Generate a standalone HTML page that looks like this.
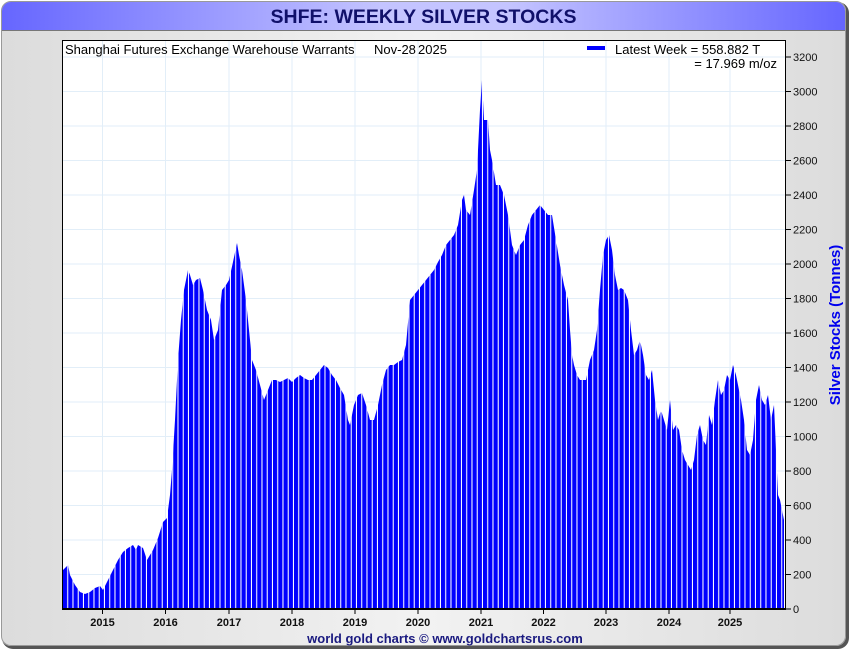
<!DOCTYPE html>
<html><head><meta charset="utf-8"><style>
html,body{margin:0;padding:0;background:#fff;width:850px;height:650px;overflow:hidden}
.frame{position:absolute;left:1px;top:1px;width:843px;height:643px;border:1px solid #999;border-radius:10px;box-shadow:2px 2px 0 1px #555;background:linear-gradient(90deg,#dcdcdc,#f2f2f2 50%,#dcdcdc);overflow:hidden}
.title{position:absolute;left:0;top:0;width:843px;height:28px;background:linear-gradient(90deg,#6666ff,#c4c4ff 45%,#c4c4ff 60%,#6666ff);border-bottom:1px solid #777;text-align:center;font:bold 19.5px "Liberation Sans",sans-serif;color:#10106a;line-height:30px}
svg{position:absolute;left:0;top:0}
</style></head><body>
<div class="frame"><div class="title">SHFE: WEEKLY SILVER STOCKS</div></div>
<svg width="850" height="650" font-family="Liberation Sans, sans-serif">
<defs><pattern id="p" patternUnits="userSpaceOnUse" width="5.25" height="10" x="63"><rect width="4.25" height="10" fill="#0000ff"/><rect x="4.25" width="1" height="10" fill="#fff"/></pattern></defs>
<rect x="62" y="40" width="724" height="569" fill="#fff"/>
<g stroke="#e2eef8" stroke-width="1">
<line x1="62" x2="786" y1="574.5" y2="574.5"/><line x1="62" x2="786" y1="540" y2="540"/><line x1="62" x2="786" y1="505.5" y2="505.5"/><line x1="62" x2="786" y1="471" y2="471"/><line x1="62" x2="786" y1="436.5" y2="436.5"/><line x1="62" x2="786" y1="402" y2="402"/><line x1="62" x2="786" y1="367.5" y2="367.5"/><line x1="62" x2="786" y1="333" y2="333"/><line x1="62" x2="786" y1="298.5" y2="298.5"/><line x1="62" x2="786" y1="264" y2="264"/><line x1="62" x2="786" y1="229.5" y2="229.5"/><line x1="62" x2="786" y1="195" y2="195"/><line x1="62" x2="786" y1="160.5" y2="160.5"/><line x1="62" x2="786" y1="126" y2="126"/><line x1="62" x2="786" y1="91.5" y2="91.5"/><line x1="62" x2="786" y1="57" y2="57"/>
<line x1="102.5" x2="102.5" y1="40" y2="609"/><line x1="165.5" x2="165.5" y1="40" y2="609"/><line x1="229" x2="229" y1="40" y2="609"/><line x1="292" x2="292" y1="40" y2="609"/><line x1="355" x2="355" y1="40" y2="609"/><line x1="418" x2="418" y1="40" y2="609"/><line x1="481" x2="481" y1="40" y2="609"/><line x1="543.5" x2="543.5" y1="40" y2="609"/><line x1="606" x2="606" y1="40" y2="609"/><line x1="669" x2="669" y1="40" y2="609"/><line x1="730" x2="730" y1="40" y2="609"/>
</g>
<polygon fill="url(#p)" points="63,609 63,570 68,565 70,575 75,585 80,592 85,594 90,592 95,588 100,586 103,590 108,580 113,570 118,560 123,552 128,548 133,545 136,550 138,545 143,548 147,560 150,555 153,550 158,538 163,522 167,518 170,495 172,470 175,420 178,360 181,320 184,290 188,270 190,275 193,285 196,280 200,278 203,290 207,310 211,320 214,340 218,330 222,290 226,285 229,280 233,262 237,243 239,255 242,270 246,300 249,330 252,360 256,370 260,385 264,400 268,390 272,380 276,380 280,382 284,380 288,378 292,382 296,378 300,375 304,378 308,380 312,380 316,375 320,370 324,365 328,368 332,375 336,380 340,388 344,395 348,420 350,425 354,405 358,395 362,393 366,405 370,420 374,420 378,405 382,385 386,370 390,365 394,365 398,362 402,360 406,345 410,300 414,295 418,290 422,285 426,280 430,275 434,270 438,262 442,255 446,245 450,240 454,235 458,225 462,200 464,195 466,210 470,215 474,190 477,170 480,110 482,80 484,120 486,120 488,120 490,150 492,160 496,185 500,185 504,195 508,215 512,245 516,255 520,245 524,240 528,225 532,215 536,210 540,205 544,210 548,215 552,215 556,240 560,265 564,285 568,300 570,330 572,355 574,365 577,375 580,380 583,380 586,380 590,360 594,350 597,330 600,290 603,255 606,240 609,235 612,250 615,275 618,290 621,288 624,290 628,300 631,330 634,355 637,350 640,340 643,355 646,375 649,380 652,370 655,400 658,420 661,410 664,420 667,430 670,400 673,430 676,425 679,430 682,450 685,460 688,465 691,470 694,460 697,435 700,425 703,440 706,445 709,415 712,425 715,400 718,380 721,395 724,390 727,375 730,380 733,365 736,375 738,385 741,400 744,420 747,450 750,455 753,440 756,400 759,385 762,400 765,405 768,395 771,420 774,405 776,450 778,495 780,500 782,510 784,520 784,609"/>
<rect x="62.5" y="40.5" width="723" height="568.5" fill="none" stroke="#000" stroke-width="1"/>
<line x1="62" x2="786" y1="609" y2="609" stroke="#000" stroke-width="2"/>
<g stroke="#000"><line x1="786" x2="791" y1="609" y2="609"/><line x1="786" x2="791" y1="574.5" y2="574.5"/><line x1="786" x2="791" y1="540" y2="540"/><line x1="786" x2="791" y1="505.5" y2="505.5"/><line x1="786" x2="791" y1="471" y2="471"/><line x1="786" x2="791" y1="436.5" y2="436.5"/><line x1="786" x2="791" y1="402" y2="402"/><line x1="786" x2="791" y1="367.5" y2="367.5"/><line x1="786" x2="791" y1="333" y2="333"/><line x1="786" x2="791" y1="298.5" y2="298.5"/><line x1="786" x2="791" y1="264" y2="264"/><line x1="786" x2="791" y1="229.5" y2="229.5"/><line x1="786" x2="791" y1="195" y2="195"/><line x1="786" x2="791" y1="160.5" y2="160.5"/><line x1="786" x2="791" y1="126" y2="126"/><line x1="786" x2="791" y1="91.5" y2="91.5"/><line x1="786" x2="791" y1="57" y2="57"/>
<line x1="102.5" x2="102.5" y1="609" y2="614"/><line x1="165.5" x2="165.5" y1="609" y2="614"/><line x1="229" x2="229" y1="609" y2="614"/><line x1="292" x2="292" y1="609" y2="614"/><line x1="355" x2="355" y1="609" y2="614"/><line x1="418" x2="418" y1="609" y2="614"/><line x1="481" x2="481" y1="609" y2="614"/><line x1="543.5" x2="543.5" y1="609" y2="614"/><line x1="606" x2="606" y1="609" y2="614"/><line x1="669" x2="669" y1="609" y2="614"/><line x1="730" x2="730" y1="609" y2="614"/></g>
<g font-size="11" fill="#111"><text x="793" y="613">0</text><text x="793" y="578.5">200</text><text x="793" y="544">400</text><text x="793" y="509.5">600</text><text x="793" y="475">800</text><text x="793" y="440.5">1000</text><text x="793" y="406">1200</text><text x="793" y="371.5">1400</text><text x="793" y="337">1600</text><text x="793" y="302.5">1800</text><text x="793" y="268">2000</text><text x="793" y="233.5">2200</text><text x="793" y="199">2400</text><text x="793" y="164.5">2600</text><text x="793" y="130">2800</text><text x="793" y="95.5">3000</text><text x="793" y="61">3200</text></g>
<g font-size="11" font-weight="bold" fill="#111" text-anchor="middle"><text x="102.5" y="626">2015</text><text x="165.5" y="626">2016</text><text x="229" y="626">2017</text><text x="292" y="626">2018</text><text x="355" y="626">2019</text><text x="418" y="626">2020</text><text x="481" y="626">2021</text><text x="543.5" y="626">2022</text><text x="606" y="626">2023</text><text x="669" y="626">2024</text><text x="730" y="626">2025</text></g>
<text x="445" y="643" font-size="13" font-weight="bold" fill="#1a1a80" text-anchor="middle">world gold charts © www.goldchartsrus.com</text>
<text transform="translate(840,325) rotate(-90)" font-size="15" font-weight="bold" fill="#0000ee" text-anchor="middle">Silver Stocks (Tonnes)</text>
<text x="65" y="54" font-size="13" fill="#000">Shanghai Futures Exchange Warehouse Warrants</text>
<text x="374" y="54" font-size="13" fill="#000">Nov-28</text>
<text x="418" y="54" font-size="13" fill="#000">2025</text>
<rect x="587" y="46" width="18" height="4" fill="#0000ff"/>
<text x="615" y="54" font-size="13" fill="#000">Latest Week = 558.882 T</text>
<text x="777" y="68" font-size="13" fill="#000" text-anchor="end">= 17.969 m/oz</text>
</svg>
</body></html>
